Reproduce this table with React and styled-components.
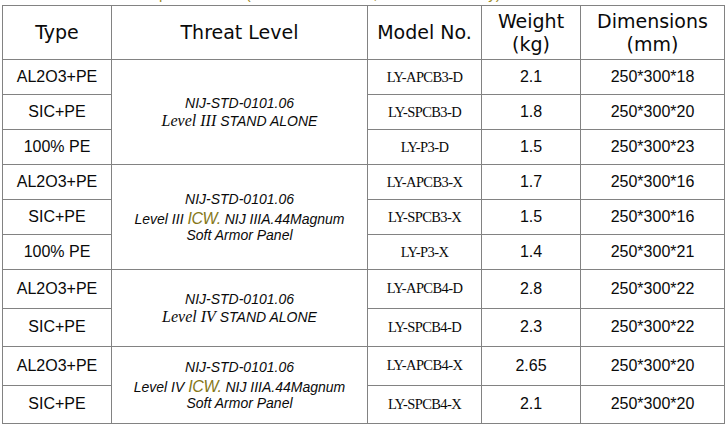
import styled, { createGlobalStyle } from "styled-components";

const GlobalStyle = createGlobalStyle`
  html, body { margin: 0; padding: 0; background: #fff; }
  body { font-family: "Liberation Sans", Arial, sans-serif; color: #111; }
`;

const Page = styled.div`
  width: 727px;
  height: 427px;
  overflow: hidden;
  padding-left: 2px;
  box-sizing: border-box;
`;

// only the descenders of the line above the table are visible
const CaptionStrip = styled.div`
  height: 4px;
  overflow: hidden;
`;

const Caption = styled.div`
  margin-top: -14.5px;
  padding-left: 147px;
  font: 15px/15px "Liberation Sans", Arial, sans-serif;
  color: #a08a1e;
  white-space: nowrap;
`;

const Table = styled.table`
  margin-top: 1px;
  width: 722px;
  table-layout: fixed;
  border-collapse: collapse;
`;

const Row = styled.tr`
  height: ${(p) => p.$h}px;
`;

const Th = styled.th`
  border: 1px solid #828282;
  padding: 0;
  text-align: center;
  vertical-align: middle;
  font-family: "DejaVu Sans", Verdana, sans-serif;
  font-weight: normal;
  font-size: 19px;
  line-height: 23px;
  color: #0a0a0a;
`;

const Td = styled.td`
  border: 1px solid #828282;
  padding: 0;
  text-align: center;
  vertical-align: middle;
  color: #0a0a0a;
  white-space: nowrap;
  font-family: ${(p) =>
    p.$serif
      ? '"Liberation Serif", "Times New Roman", serif'
      : '"Liberation Sans", Arial, sans-serif'};
  font-size: ${(p) => (p.$serif ? 14.5 : 16)}px;
  letter-spacing: ${(p) => (p.$serif ? -0.6 : 0)}px;
`;

const Threat = styled.div`
  font: italic 14px/${(p) => (p.$icw ? 16 : 17)}px "Liberation Sans", Arial, sans-serif;
  color: #0a0a0a;
`;

const ThreatLine = styled.div`
  margin-bottom: ${(p) => p.$gap || 0}px;
  white-space: nowrap;
`;

const SerifLevel = styled.span`
  font-family: "Liberation Serif", "Times New Roman", serif;
  font-size: 16px;
`;

const Icw = styled.span`
  color: #86781a;
  font-size: 16px;
  letter-spacing: -0.4px;
`;

const StandAlone = ({ level }) => (
  <Threat>
    <ThreatLine>NIJ-STD-0101.06</ThreatLine>
    <ThreatLine>
      <SerifLevel>Level {level}</SerifLevel> STAND ALONE
    </ThreatLine>
  </Threat>
);

const InConjunction = ({ level }) => (
  <Threat $icw>
    <ThreatLine $gap={4}>NIJ-STD-0101.06</ThreatLine>
    <ThreatLine>
      Level {level} <Icw>ICW.</Icw> NIJ IIIA.44Magnum
    </ThreatLine>
    <ThreatLine>Soft Armor Panel</ThreatLine>
  </Threat>
);

const groups = [
  {
    threat: <StandAlone level="III" />,
    h: 35,
    rows: [
      ["AL2O3+PE", "LY-APCB3-D", "2.1", "250*300*18"],
      ["SIC+PE", "LY-SPCB3-D", "1.8", "250*300*20"],
      ["100% PE", "LY-P3-D", "1.5", "250*300*23"],
    ],
  },
  {
    threat: <InConjunction level="III" />,
    h: 35,
    rows: [
      ["AL2O3+PE", "LY-APCB3-X", "1.7", "250*300*16"],
      ["SIC+PE", "LY-SPCB3-X", "1.5", "250*300*16"],
      ["100% PE", "LY-P3-X", "1.4", "250*300*21"],
    ],
  },
  {
    threat: <StandAlone level="IV" />,
    h: 38.5,
    rows: [
      ["AL2O3+PE", "LY-APCB4-D", "2.8", "250*300*22"],
      ["SIC+PE", "LY-SPCB4-D", "2.3", "250*300*22"],
    ],
  },
  {
    threat: <InConjunction level="IV" />,
    h: 38.5,
    rows: [
      ["AL2O3+PE", "LY-APCB4-X", "2.65", "250*300*20"],
      ["SIC+PE", "LY-SPCB4-X", "2.1", "250*300*20"],
    ],
  },
];

export default function App() {
  return (
    <Page>
      <GlobalStyle />
      <CaptionStrip>
        <Caption>Specifications (Hard Armor Plates, Level III / IV Only)</Caption>
      </CaptionStrip>
      <Table>
        <colgroup>
          <col style={{ width: 109 }} />
          <col style={{ width: 256 }} />
          <col style={{ width: 114 }} />
          <col style={{ width: 99 }} />
          <col style={{ width: 144 }} />
        </colgroup>
        <thead>
          <Row $h={54}>
            <Th>Type</Th>
            <Th>Threat Level</Th>
            <Th>Model No.</Th>
            <Th>
              Weight
              <br />
              (kg)
            </Th>
            <Th>
              Dimensions
              <br />
              (mm)
            </Th>
          </Row>
        </thead>
        <tbody>
          {groups.map((g, gi) =>
            g.rows.map(([type, model, weight, dims], ri) => (
              <Row key={`${gi}-${ri}`} $h={g.h}>
                <Td>{type}</Td>
                {ri === 0 && <Td rowSpan={g.rows.length}>{g.threat}</Td>}
                <Td $serif>{model}</Td>
                <Td>{weight}</Td>
                <Td>{dims}</Td>
              </Row>
            ))
          )}
        </tbody>
      </Table>
    </Page>
  );
}
